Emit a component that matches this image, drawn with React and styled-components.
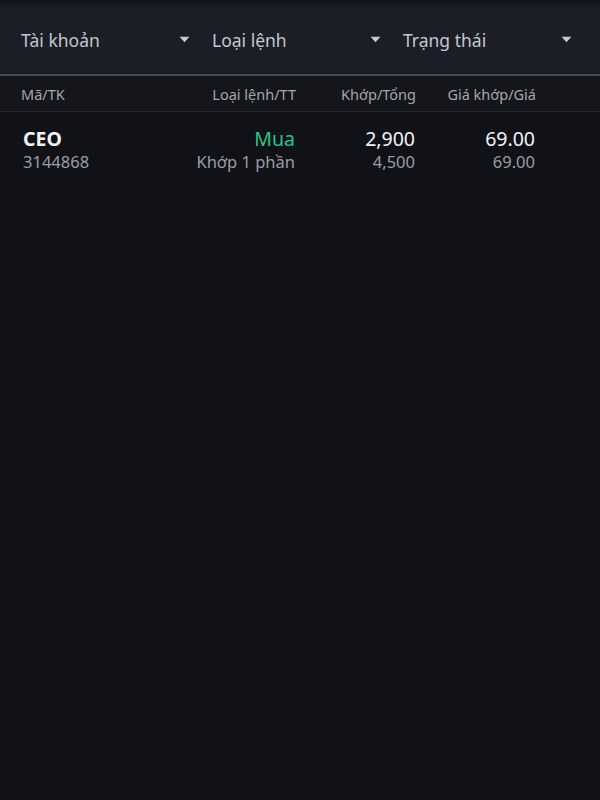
import React from "react";
import styled, { createGlobalStyle } from "styled-components";

const filters = ["Tài khoản", "Loại lệnh", "Trạng thái"];

const orders = [
  {
    code: "CEO",
    account: "3144868",
    side: "Mua",
    status: "Khớp 1 phần",
    matched: "2,900",
    total: "4,500",
    matchPrice: "69.00",
    price: "69.00",
  },
];

const App = () => {
  return (
    <>
      <GlobalStyle />
      <Page>
        <FilterBar>
          {filters.map((f) => (
            <Filter key={f}>
              <FilterLabel>{f}</FilterLabel>
              <Caret viewBox="0 0 10 6">
                <path d="M0.5 0.5 L9.5 0.5 L5 5.5 Z" fill="currentColor" />
              </Caret>
            </Filter>
          ))}
        </FilterBar>
        <HeadRow>
          <HeadCell>Mã/TK</HeadCell>
          <HeadCell $right>Loại lệnh/TT</HeadCell>
          <HeadCell $right>Khớp/Tổng</HeadCell>
          <HeadCell $right>Giá khớp/Giá</HeadCell>
        </HeadRow>
        {orders.map((o) => (
          <OrderRow key={o.code + o.account}>
            <Cell>
              <Primary $bold>{o.code}</Primary>
              <Secondary>{o.account}</Secondary>
            </Cell>
            <Cell $right>
              <Primary $color="#2cc489">{o.side}</Primary>
              <Secondary>{o.status}</Secondary>
            </Cell>
            <Cell $right>
              <Primary>{o.matched}</Primary>
              <Secondary>{o.total}</Secondary>
            </Cell>
            <Cell $right>
              <Primary>{o.matchPrice}</Primary>
              <Secondary>{o.price}</Secondary>
            </Cell>
          </OrderRow>
        ))}
      </Page>
    </>
  );
};

const GlobalStyle = createGlobalStyle`
  html, body {
    margin: 0;
    padding: 0;
    background: #101217;
  }
  body {
    font-family: "Noto Sans", "Open Sans", sans-serif;
  }
`;
const Page = styled.div`
  width: 600px;
  min-height: 800px;
  background: #101217;
`;
const FilterBar = styled.div`
  display: grid;
  grid-template-columns: repeat(3, 191px);
  padding: 0 12px;
  height: 76px;
  align-items: center;
  background: linear-gradient(#0f1218 0, #1b1e26 9px, #1b1e26 100%);
  border-bottom: 2px solid #464a52;
  box-sizing: border-box;
`;
const Filter = styled.div`
  display: flex;
  align-items: center;
  justify-content: space-between;
  padding: 5px 13px 0 9px;
  color: #c3c7cf;
`;
const FilterLabel = styled.span`
  font-size: 17.5px;
  color: #c3c7cf;
`;
const Caret = styled.svg`
  width: 11px;
  height: 7px;
  color: #c7cad1;
`;
const HeadRow = styled.div`
  display: grid;
  grid-template-columns: 1fr 120px 120px 120px;
  padding: 0 64px 0 21px;
  height: 35px;
  align-items: center;
  background: #14161b;
  border-bottom: 1px solid #24272d;
`;
const HeadCell = styled.div`
  font-size: 14.5px;
  color: #a3a7ae;
  text-align: ${(p) => (p.$right ? "right" : "left")};
`;
const OrderRow = styled.div`
  display: grid;
  grid-template-columns: 1fr 120px 120px 120px;
  padding: 14px 65px 0 23px;
  align-items: start;
`;
const Cell = styled.div`
  display: flex;
  flex-direction: column;
  align-items: ${(p) => (p.$right ? "flex-end" : "flex-start")};
`;
const Primary = styled.div`
  font-size: 19.5px;
  line-height: 25px;
  font-weight: ${(p) => (p.$bold ? 700 : 400)};
  color: ${(p) => p.$color || "#f2f3f5"};
`;
const Secondary = styled.div`
  font-size: 16.5px;
  line-height: 22px;
  color: #9a9ea6;
`;

export default App;
